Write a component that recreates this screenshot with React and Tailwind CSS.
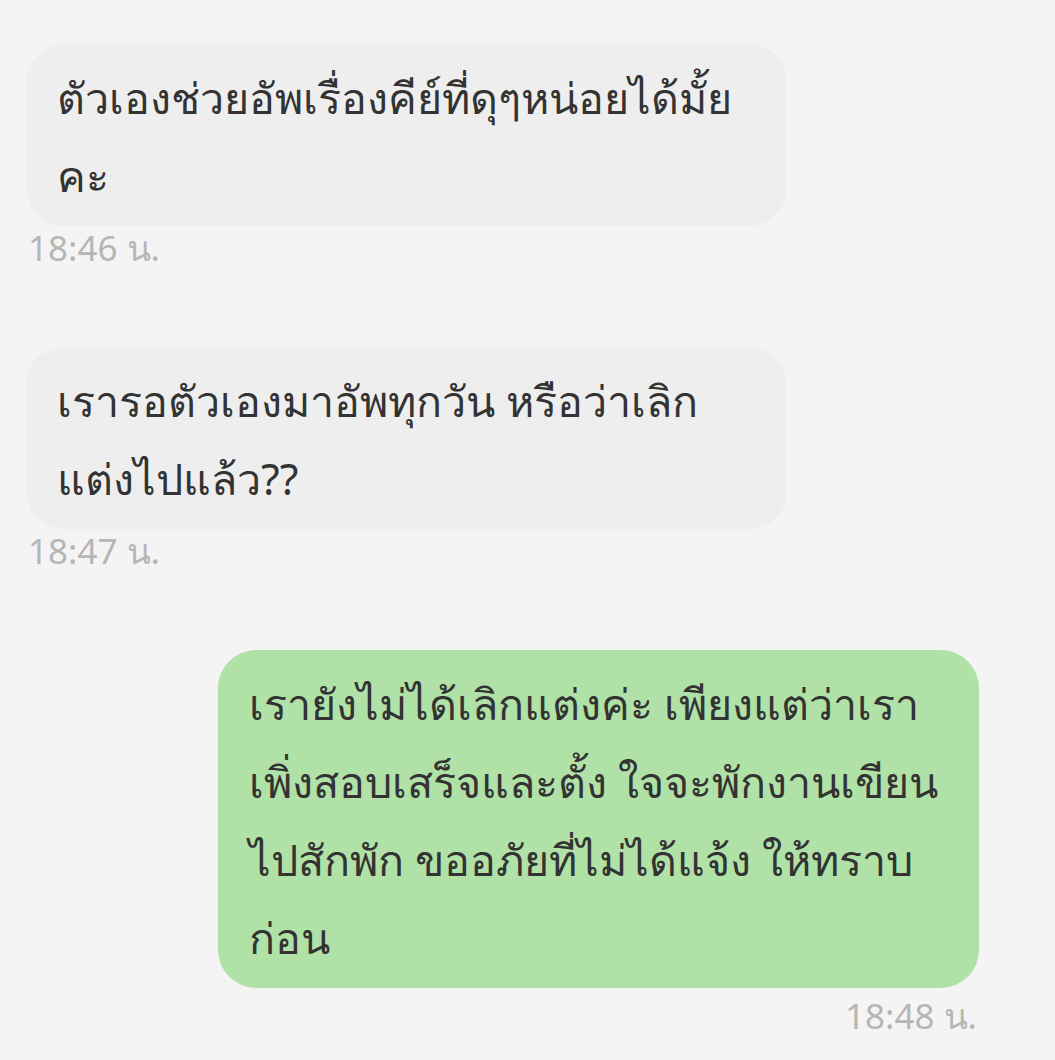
const font = { fontFamily: '"Noto Sans", "Liberation Sans", sans-serif' }

function Bubble({ lines, mine }) {
  return (
    <div
      className={`w-[761px] rounded-[38px] pl-[31px] pr-[20px] pt-[15px] pb-[11px] text-[43px] leading-[78px] text-[#333333] ${
        mine ? 'ml-[192px] bg-[#b0e2a8]' : 'bg-[#eeeeee]'
      }`}
    >
      {lines.map((l, i) => (
        <div key={i} className="whitespace-nowrap">{l}</div>
      ))}
    </div>
  )
}

function Stamp({ time, right }) {
  return (
    <div
      className={`text-[35px] leading-[40px] text-[#b6b6b6] ${
        right ? 'mt-[8px] w-[951px] text-right' : 'mt-[2px] ml-[2px]'
      }`}
    >
      {time}
    </div>
  )
}

export default function App() {
  return (
    <div style={font} className="w-[1055px] h-[1060px] overflow-hidden bg-[#f4f4f4] pt-[44px] pl-[26px]">
      <Bubble lines={['ตัวเองช่วยอัพเรื่องคีย์ที่ดุๆหน่อยได้มั้ย', 'คะ']} />
      <Stamp time="18:46 น." />

      <div className="mt-[79px]">
        <Bubble lines={['เรารอตัวเองมาอัพทุกวัน หรือว่าเลิก', 'แต่งไปแล้ว??']} />
        <Stamp time="18:47 น." />
      </div>

      <div className="mt-[79px]">
        <Bubble
          mine
          lines={[
            'เรายังไม่ได้เลิกแต่งค่ะ เพียงแต่ว่าเรา',
            'เพิ่งสอบเสร็จและตั้ง ใจจะพักงานเขียน',
            'ไปสักพัก ขออภัยที่ไม่ได้แจ้ง ให้ทราบ',
            'ก่อน',
          ]}
        />
        <Stamp time="18:48 น." right />
      </div>
    </div>
  )
}
